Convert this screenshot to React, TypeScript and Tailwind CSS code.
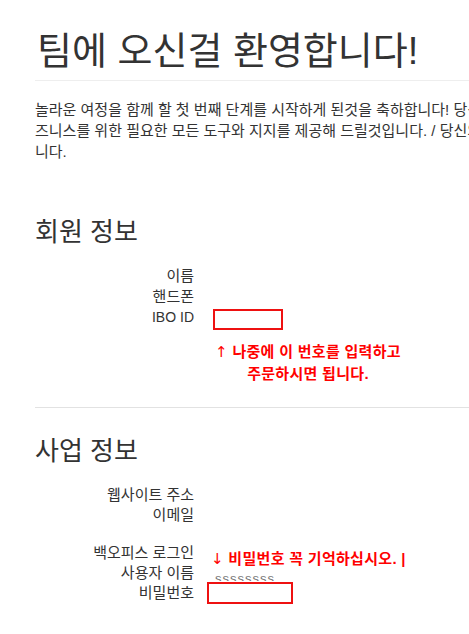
import React from "react";

const font = { fontFamily: '"Liberation Sans", "Noto Sans CJK KR", sans-serif' };

function Arrow({ ch }: { ch: string }) {
  return <span className="font-normal [font-family:'DejaVu_Sans',sans-serif]">{ch}</span>;
}

function Row({ label, children, h = "h-[20px]", lh = "leading-[20px]", size = "text-[15px]" }: { label: string; children?: React.ReactNode; h?: string; lh?: string; size?: string }) {
  return (
    <div className={`grid grid-cols-[159px_1fr] gap-x-[19px] ${h}`}>
      <div className={`text-right ${size} ${lh} text-[#333] whitespace-nowrap`}>{label}</div>
      <div className="relative">{children}</div>
    </div>
  );
}

export default function App() {
  return (
    <div className="w-[469px] h-[634px] overflow-hidden bg-white" style={font}>
      <div className="w-[640px] pl-[35px] pt-[31px]">
        <h1 className="text-[38px] leading-[40px] text-[#333] font-normal whitespace-nowrap pl-[2px]">
          팀에 오신걸 환영합니다!
        </h1>
        <div className="mt-[9px] border-t border-[#eeeeee]" />
        <p className="mt-[18px] text-[15px] leading-[21px] text-[#333] whitespace-nowrap">
          놀라운 여정을 함께 할 첫 번째 단계를 시작하게 된것을 축하합니다! 당신의 비
          <br />
          즈니스를 위한 필요한 모든 도구와 지지를 제공해 드릴것입니다. / 당신의 성공을 위해 최선을 다하겠습
          <br />
          니다.
        </p>

        <h2 className="mt-[55px] text-[26px] leading-[30px] text-[#333] font-normal">회원 정보</h2>
        <div className="mt-[18px] flex flex-col">
          <Row label="이름" h="h-[21px]" lh="leading-[21px]" />
          <Row label="핸드폰" h="h-[21px]" lh="leading-[21px]" />
          <Row label="IBO ID" h="h-[21px]" lh="leading-[21px]" size="text-[14px]">
            <div className="mt-[1.5px] w-[70px] h-[21px] border-2 border-[#ee1111] bg-white" />
          </Row>
          <div className="grid grid-cols-[159px_1fr] gap-x-[19px] mt-[13px]">
            <div />
            <div className="w-[190px] text-center text-[15px] leading-[21px] font-bold tracking-[0.3px] text-[#ff0000] whitespace-nowrap">
              <Arrow ch="↑" /> 나중에 이 번호를 입력하고
              <br />
              주문하시면 됩니다.
            </div>
          </div>
        </div>

        <div className="mt-[23px] border-t border-[#e2e2e2]" />

        <h2 className="mt-[28px] text-[26px] leading-[30px] text-[#333] font-normal">사업 정보</h2>
        <div className="mt-[19px] flex flex-col">
          <Row label="웹사이트 주소" />
          <Row label="이메일" />
          <div className="h-[18px]" />
          <Row label="백오피스 로그인">
            <div className="absolute left-[-2px] top-[6px] text-[15px] leading-[20px] font-bold tracking-[0.3px] text-[#ff0000] whitespace-nowrap">
              <Arrow ch="↓" /> 비밀번호 꼭 기억하십시오. |
            </div>
          </Row>
          <Row label="사용자 이름">
            <div className="absolute left-[2px] top-[13px] h-[5px] w-[80px] overflow-hidden">
              <div className="-mt-[5px] text-[13px] leading-[15px] text-[#777] tracking-[1px]">ssssssss</div>
            </div>
          </Row>
          <Row label="비밀번호">
            <div className="absolute left-[-6px] top-[-1px] w-[86px] h-[22px] border-2 border-[#ee1111] bg-white" />
          </Row>
        </div>
      </div>
    </div>
  );
}
